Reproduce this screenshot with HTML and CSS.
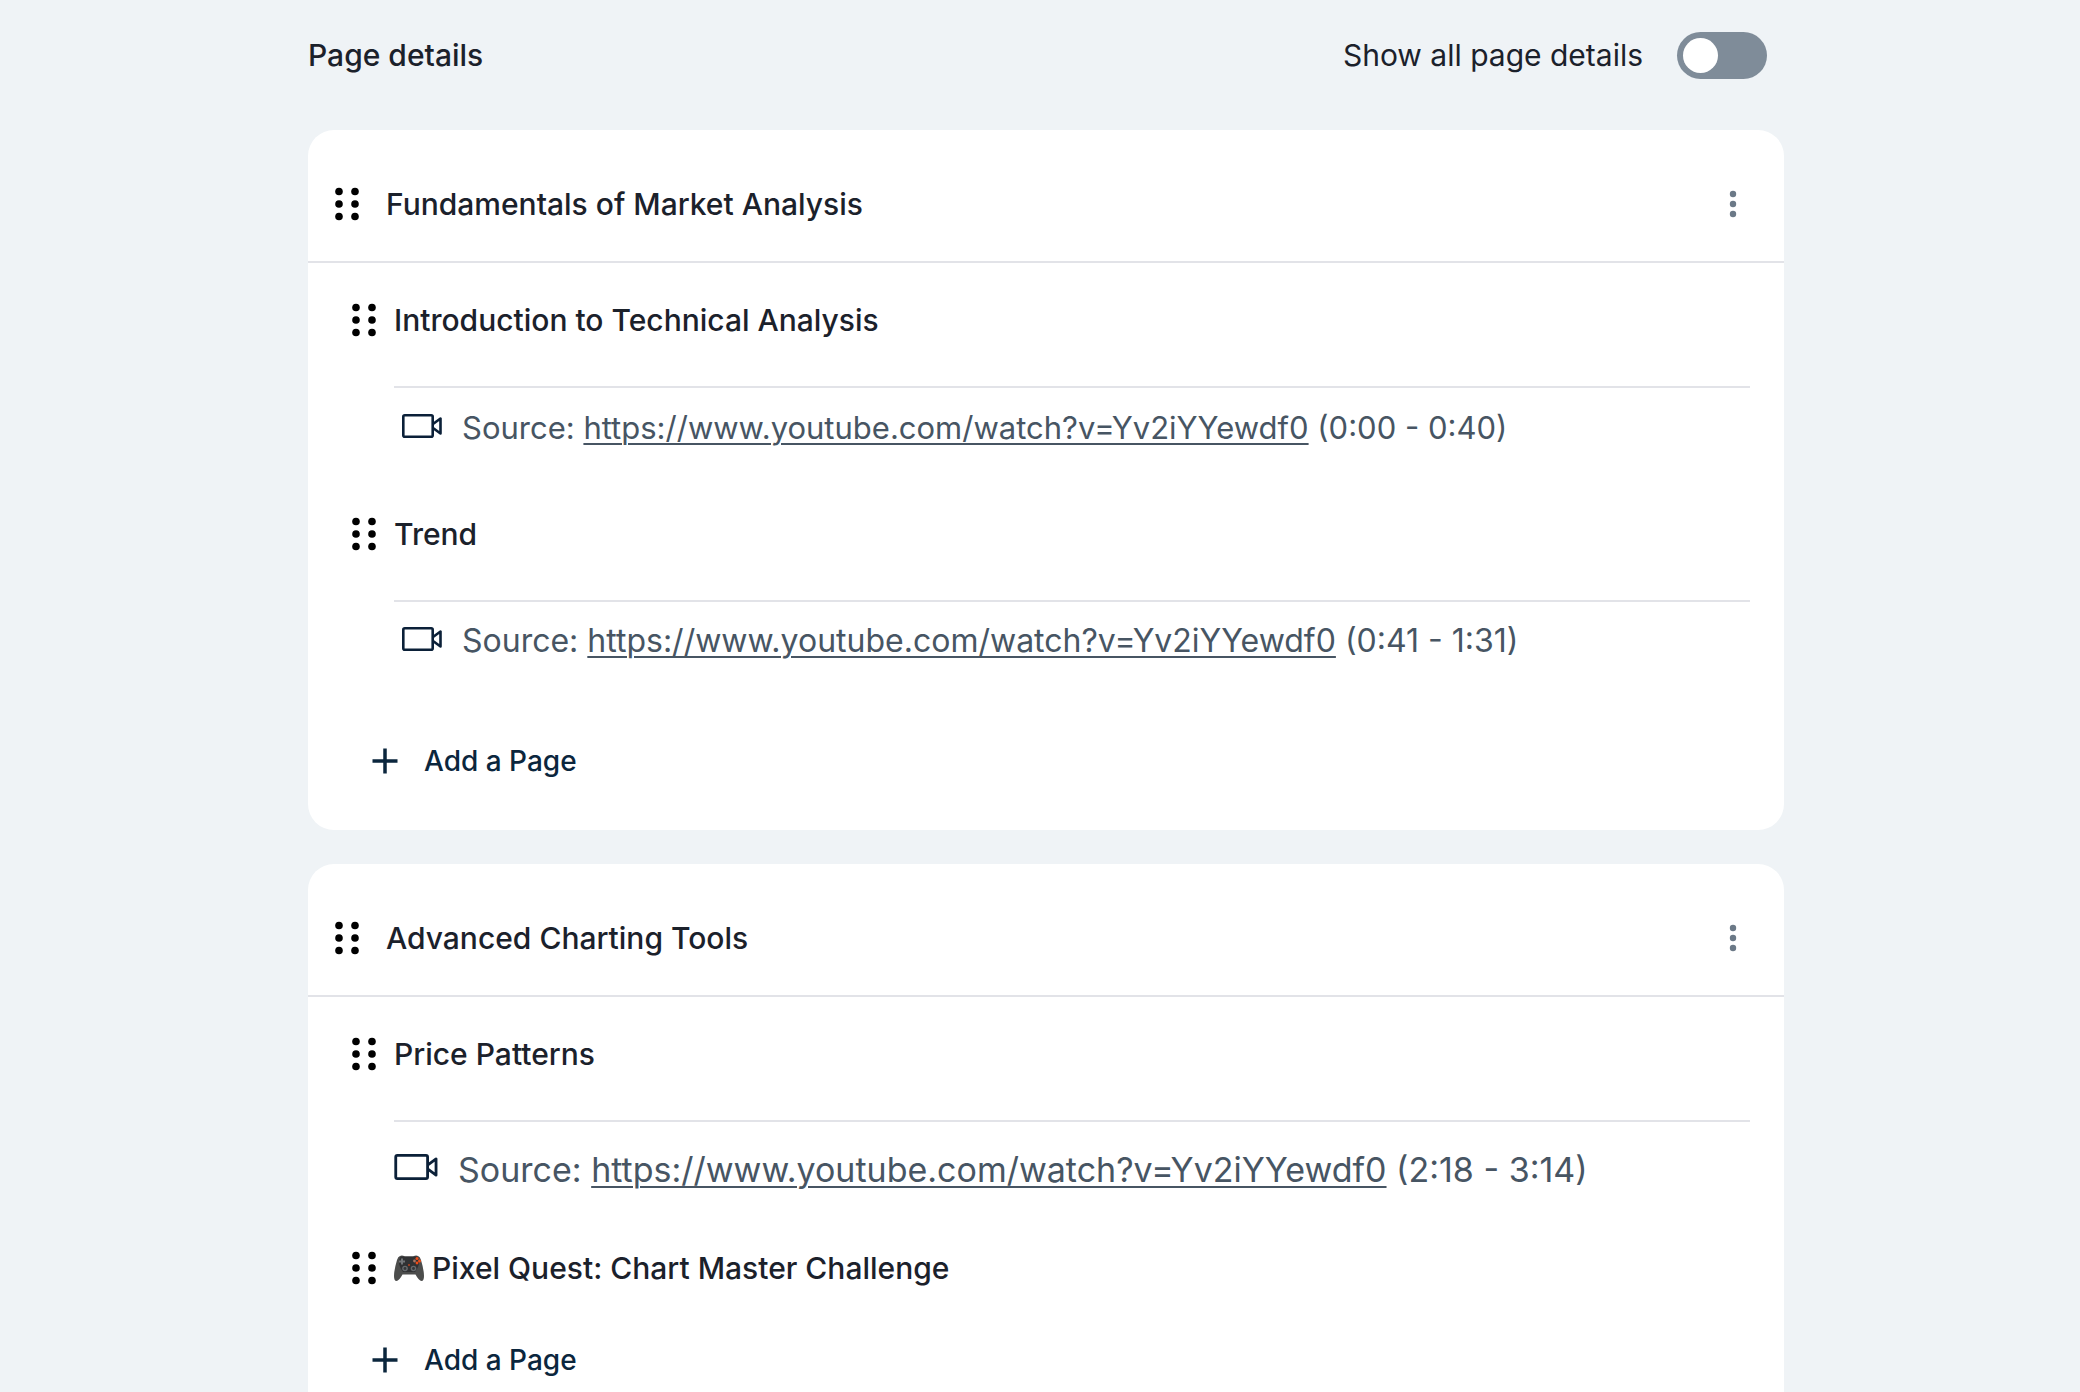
FILE: index.html
```html
<!DOCTYPE html>
<html lang="en">
<head>
    <meta charset="UTF-8">
    <meta name="viewport" content="width=device-width, initial-scale=1.0">
    <title>Page details</title>
    <link rel="stylesheet" href="styles.css">
</head>
<body>
    <!-- shared icons -->
    <svg class="sprite" aria-hidden="true">
        <symbol id="drag" viewBox="0 0 24 34">
            <circle cx="4" cy="4.5" r="3.8"/><circle cx="20" cy="4.5" r="3.8"/>
            <circle cx="4" cy="17" r="3.8"/><circle cx="20" cy="17" r="3.8"/>
            <circle cx="4" cy="29.5" r="3.8"/><circle cx="20" cy="29.5" r="3.8"/>
        </symbol>
        <symbol id="more" viewBox="0 0 8 28">
            <circle cx="4" cy="4" r="3.2"/><circle cx="4" cy="14" r="3.2"/><circle cx="4" cy="24" r="3.2"/>
        </symbol>
        <symbol id="video" viewBox="0 0 40 24">
            <g fill="none" stroke="currentColor" stroke-width="2.6" stroke-linejoin="round">
                <rect x="1.3" y="1.3" width="29.4" height="21.4" rx="1.5"/>
                <path d="M31 10L38.5 4.5V19.5L31 14"/>
            </g>
        </symbol>
        <symbol id="plus" viewBox="0 0 26 26">
            <path d="M13 0.5V25.5M0.5 13H25.5" fill="none" stroke="currentColor" stroke-width="3.5"/>
        </symbol>
    </svg>

    <div class="container">
        <div class="top-bar">
            <h1>Page details</h1>
            <div class="toggle">
                <label for="showAll">Show all page details</label>
                <input type="checkbox" id="showAll" role="switch">
            </div>
        </div>

        <div class="card">
            <div class="card-header">
                <svg class="drag"><use href="#drag"/></svg>
                <h2>Fundamentals of Market Analysis</h2>
                <button class="more" aria-label="More options"><svg><use href="#more"/></svg></button>
            </div>

            <div class="page">
                <div class="page-title">
                    <svg class="drag"><use href="#drag"/></svg>
                    <h3>Introduction to Technical Analysis</h3>
                </div>
                <div class="source">
                    <svg class="video"><use href="#video"/></svg>
                    <p>Source: <a href="https://www.youtube.com/watch?v=Yv2iYYewdf0">https://www.youtube.com/watch?v=Yv2iYYewdf0</a> (0:00 - 0:40)</p>
                </div>
            </div>

            <div class="page">
                <div class="page-title">
                    <svg class="drag"><use href="#drag"/></svg>
                    <h3>Trend</h3>
                </div>
                <div class="source medium">
                    <svg class="video"><use href="#video"/></svg>
                    <p>Source: <a href="https://www.youtube.com/watch?v=Yv2iYYewdf0">https://www.youtube.com/watch?v=Yv2iYYewdf0</a> (0:41 - 1:31)</p>
                </div>
            </div>

            <button class="add-page spaced"><svg><use href="#plus"/></svg>Add a Page</button>
        </div>

        <div class="card">
            <div class="card-header">
                <svg class="drag"><use href="#drag"/></svg>
                <h2>Advanced Charting Tools</h2>
                <button class="more" aria-label="More options"><svg><use href="#more"/></svg></button>
            </div>

            <div class="page">
                <div class="page-title">
                    <svg class="drag"><use href="#drag"/></svg>
                    <h3>Price Patterns</h3>
                </div>
                <div class="source large">
                    <svg class="video"><use href="#video"/></svg>
                    <p>Source: <a href="https://www.youtube.com/watch?v=Yv2iYYewdf0">https://www.youtube.com/watch?v=Yv2iYYewdf0</a> (2:18 - 3:14)</p>
                </div>
            </div>

            <div class="page">
                <div class="page-title">
                    <svg class="drag"><use href="#drag"/></svg>
                    <h3>
                        <svg class="gamepad" viewBox="0 0 30 26" role="img" aria-label="Game controller">
                            <path d="M6 1Q8 0 11 1.5H19Q22 0 24 1Q26 1.5 27 5Q30 15 30 21Q30 26 27.5 26Q25 26 21.5 19.5H8.5Q5 26 2.5 26Q0 26 0 21Q0 15 3 5Q4 1.5 6 1Z" fill="#4c4d4c"/>
                            <path d="M7 1.5H23Q25 3 25 9Q24 13 21 17H9Q6 13 5 9Q5 3 7 1.5Z" fill="#303133"/>
                            <path d="M8 3.5V9.5M5 6.5H11" stroke="#737679" stroke-width="2"/>
                            <circle cx="11" cy="13.5" r="2.8" fill="#666a6d"/><circle cx="11" cy="13.5" r="1.4" fill="#343638"/>
                            <circle cx="19.5" cy="13.5" r="2.8" fill="#666a6d"/><circle cx="19.5" cy="13.5" r="1.4" fill="#343638"/>
                            <circle cx="23" cy="3.5" r="1.5" fill="#f04c17"/><circle cx="25.5" cy="6" r="1.5" fill="#f04c17"/>
                            <circle cx="23" cy="8" r="1.4" fill="#f04c17"/><circle cx="20.5" cy="6" r="1.4" fill="#a97562"/>
                            <circle cx="15" cy="10" r="1" fill="#b94421"/>
                        </svg>Pixel Quest: Chart Master Challenge
                    </h3>
                </div>
            </div>

            <button class="add-page"><svg><use href="#plus"/></svg>Add a Page</button>
        </div>
    </div>
</body>
</html>
```

FILE: styles.css
```css
* {
    box-sizing: border-box;
}
body {
    font-family: Inter, "Liberation Sans", sans-serif;
    background: #eff3f6;
    color: #1b212b;
    margin: 0;
    overflow-x: hidden;
}
h1, h2, h3, p {
    margin: 0;
}
h1, h2, h3 {
    font-size: 30px;
    font-weight: 500;
    line-height: 36px;
}
button {
    font-family: inherit;
    background: none;
    border: none;
    padding: 0;
    cursor: pointer;
}
svg {
    display: block;
    flex-shrink: 0;
}
.sprite {
    position: absolute;
    width: 0;
    height: 0;
}
.container {
    padding: 0 296px 0 308px;
}

/* top bar */
.top-bar {
    display: flex;
    align-items: center;
    justify-content: space-between;
    height: 110px;
    margin-bottom: 20px;
    padding-right: 17px;
}
.toggle {
    display: flex;
    align-items: center;
    gap: 34px;
    font-size: 30px;
    line-height: 36px;
}
.toggle input {
    appearance: none;
    display: flex;
    align-items: center;
    width: 90px;
    height: 47px;
    margin: 0;
    padding: 6px;
    border-radius: 24px;
    background: #7f8c99;
    cursor: pointer;
}
.toggle input::before {
    content: "";
    width: 35px;
    height: 35px;
    border-radius: 50%;
    background: white;
}
.toggle input:checked {
    justify-content: flex-end;
    background: #0a2540;
}

/* cards */
.card {
    background: white;
    border-radius: 26px;
    padding-bottom: 34px;
    margin-bottom: 34px;
}
.card-header {
    display: flex;
    align-items: center;
    height: 133px;
    padding: 17px 47px 0 26px;
    border-bottom: 2px solid #e2e3e8;
}
.card-header h2 {
    flex: 1;
    margin-left: 27px;
}
.drag {
    width: 24px;
    height: 34px;
    margin-left: 1px;
}
.more {
    color: #6b7987;
    padding: 10px 0;
}
.more svg {
    width: 8px;
    height: 28px;
    fill: currentColor;
}

/* pages */
.page {
    padding: 0 34px 0 43px;
}
.page-title {
    display: flex;
    align-items: center;
    height: 123px;
    padding-bottom: 9px;
}
.page-title h3 {
    display: flex;
    align-items: center;
    gap: 8px;
    margin-left: 18px;
}
.page-title:last-child {
    height: 114px;
    padding-bottom: 0;
}
.gamepad {
    width: 30px;
    height: 26px;
}
.source {
    display: flex;
    height: 91px;
    margin-left: 43px;
    padding: 22px 0 0 8px;
    border-top: 2px solid #e2e3e8;
    color: #475563;
    font-size: 31px;
    line-height: 36px;
}
.source a {
    color: inherit;
    text-decoration-thickness: 2px;
    text-underline-offset: 4px;
}
.video {
    width: 40px;
    height: 24px;
    margin: 4px 20px 0 0;
    color: #0b2038;
}
.source.medium {
    padding-top: 21px;
    font-size: 32px;
}
.source.large {
    padding: 30px 0 0 0;
    font-size: 34px;
}
.large .video {
    width: 44px;
    height: 26px;
    margin-top: 2px;
}

.add-page {
    display: flex;
    align-items: center;
    gap: 26px;
    height: 70px;
    margin-left: 64px;
    color: #0b263d;
    font-size: 28px;
    font-weight: 500;
}
.add-page.spaced {
    margin-top: 35px;
}
.add-page svg {
    width: 26px;
    height: 26px;
}
```
